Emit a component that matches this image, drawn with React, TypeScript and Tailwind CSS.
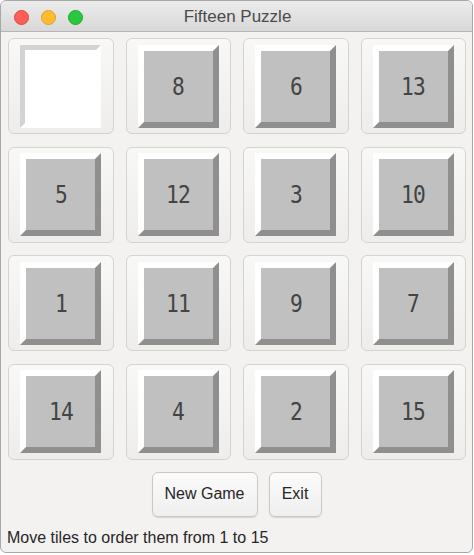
const tiles = [0, 8, 6, 13, 5, 12, 3, 10, 1, 11, 9, 7, 14, 4, 2, 15];

function Tile({ value }: { value: number }) {
  const blank = value === 0;
  return (
    <div className="h-[96px] rounded-[6px] border border-[#d6d2ce] bg-gradient-to-b from-[#f8f8f7] to-[#eeedec] flex items-center justify-center">
      <div
        className={
          blank
            ? "w-[81px] h-[83px] border-[5px] border-t-[#d3d3d3] border-l-[#d3d3d3] border-b-white border-r-white bg-white"
            : "w-[81px] h-[83px] border-t-[6px] border-l-[6px] border-b-[6px] border-r-[6px] border-t-white border-l-white border-b-[#8f8f8f] border-r-[#8f8f8f] bg-[#c0c0c0] flex items-center justify-center"
        }
      >
        {!blank && (
          <span className="text-[25px] leading-none text-[#444444] font-['DejaVu_Sans_Mono',monospace] tracking-[-1px] scale-x-[0.85] inline-block">
            {value}
          </span>
        )}
      </div>
    </div>
  );
}

export default function App() {
  return (
    <div className="w-[474px] h-[555px] bg-white font-['Liberation_Sans',Arial,sans-serif]">
      <div className="w-[473px] h-[553px] rounded-[6px] border border-[#a8a8a8] overflow-hidden flex flex-col bg-[#f3f2f1]">
        <div className="h-[31px] shrink-0 relative flex items-center justify-center bg-gradient-to-b from-[#ececec] to-[#d8d8d8] border-b border-[#b5b5b5]">
          <div className="absolute left-[13px] top-[9px] flex gap-[12px]">
            <span className="w-[15px] h-[15px] rounded-full bg-[#fd5f57] border border-[#e0443e]" />
            <span className="w-[15px] h-[15px] rounded-full bg-[#febc2e] border border-[#dea123]" />
            <span className="w-[15px] h-[15px] rounded-full bg-[#28c840] border border-[#1aab29]" />
          </div>
          <span className="text-[17px] text-[#4b4b4b] pt-[2px] ml-[2px]">Fifteen Puzzle</span>
        </div>

        <div className="pt-[6px] pl-[7px] pr-[6px] grid grid-cols-4 gap-x-[12px] gap-y-[12.5px]">
          {tiles.map((t, i) => (
            <Tile key={i} value={t} />
          ))}
        </div>

        <div className="flex justify-center gap-[11px] mt-[12px]">
          <button className="w-[106px] h-[45px] rounded-[6px] border border-[#cbc7c3] bg-gradient-to-b from-[#fbfbfb] to-[#efefef] shadow-[0_1px_1px_rgba(0,0,0,0.12)] text-[16px] text-[#262626]">
            New Game
          </button>
          <button className="w-[53px] h-[45px] rounded-[6px] border border-[#cbc7c3] bg-gradient-to-b from-[#fbfbfb] to-[#efefef] shadow-[0_1px_1px_rgba(0,0,0,0.12)] text-[16px] text-[#262626]">
            Exit
          </button>
        </div>

        <div className="pl-[6px] mt-[13px] text-[16px] text-[#262626] leading-none">
          Move tiles to order them from 1 to 15
        </div>
      </div>
    </div>
  );
}
